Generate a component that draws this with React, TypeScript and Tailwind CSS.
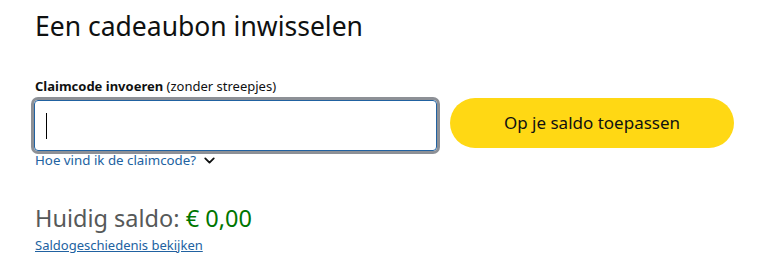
import { ChevronDown } from "lucide-react";

export default function App() {
  return (
    <div className="min-h-[268px] w-[759px] bg-white px-[34px] pt-[8px] font-['Noto_Sans',_Arial,_sans-serif] text-[#0f1111]">
      <h1 className="pl-px text-[26.5px] leading-[36px] font-normal">Een cadeaubon inwisselen</h1>

      <div className="mt-[33px] flex items-start gap-[13px]">
        <div className="w-[403px] shrink-0">
          <label className="block pl-px text-[13px] leading-[19px]">
            <span className="font-bold">Claimcode invoeren</span> (zonder streepjes)
          </label>
          <div className="mt-[4px] flex h-[51px] items-center rounded-[4px] border border-[#2162a1] px-[11px] shadow-[0_0_0_3px_#8d9096]">
            <div className="h-[26px] w-px bg-black" />
          </div>
          <a href="#" className="flex items-center gap-[5px] pl-px text-[13.3px] leading-[19px] text-[#2162a1]">
            Hoe vind ik de claimcode?
            <ChevronDown size={17} strokeWidth={2.6} className="text-[#0f1111]" />
          </a>
        </div>
        <button
          type="button"
          className="mt-[21px] h-[50px] w-[284px] shrink-0 rounded-full bg-[#ffd814] text-[17px] text-[#0f1111]"
        >
          Op je saldo toepassen
        </button>
      </div>

      <div className="mt-[33px] pl-px text-[23.5px] leading-[30px] text-[#565959]">
        Huidig saldo: <span className="text-[#007600]">€ 0,00</span>
      </div>
      <a href="#" className="mt-[3px] block pl-px text-[13px] leading-[19px] text-[#2162a1] underline">
        Saldogeschiedenis bekijken
      </a>
    </div>
  );
}
